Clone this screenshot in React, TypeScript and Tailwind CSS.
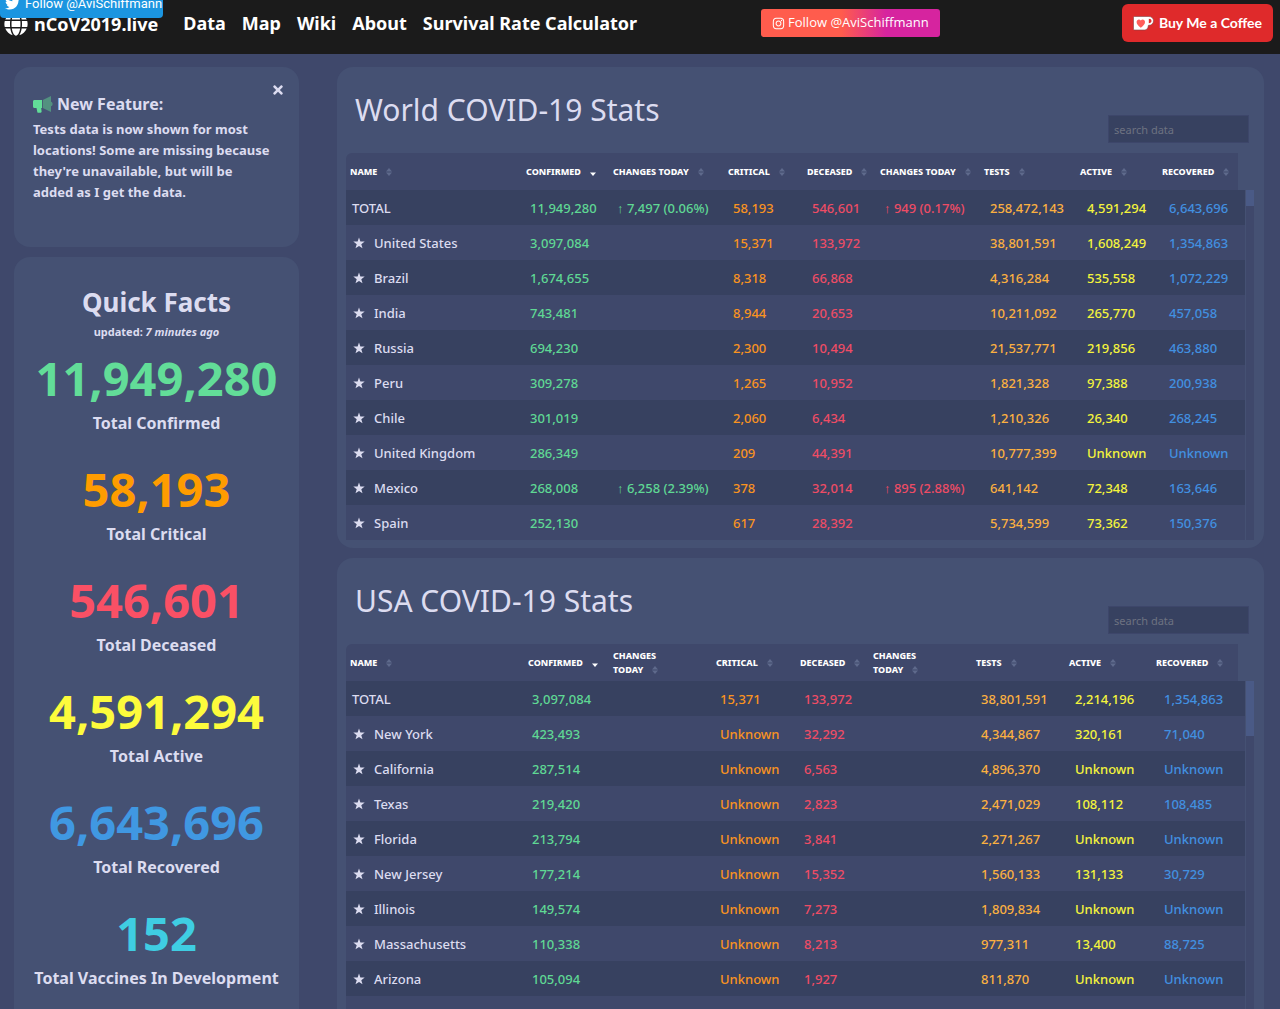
import { FaGlobe, FaInstagram, FaTimes, FaTwitter } from 'react-icons/fa'

type Row = [string, string, string, string, string, string, string, string, string]

const worldRows: Row[] = [
  ['TOTAL', '11,949,280', '↑ 7,497 (0.06%)', '58,193', '546,601', '↑ 949 (0.17%)', '258,472,143', '4,591,294', '6,643,696'],
  ['United States', '3,097,084', '', '15,371', '133,972', '', '38,801,591', '1,608,249', '1,354,863'],
  ['Brazil', '1,674,655', '', '8,318', '66,868', '', '4,316,284', '535,558', '1,072,229'],
  ['India', '743,481', '', '8,944', '20,653', '', '10,211,092', '265,770', '457,058'],
  ['Russia', '694,230', '', '2,300', '10,494', '', '21,537,771', '219,856', '463,880'],
  ['Peru', '309,278', '', '1,265', '10,952', '', '1,821,328', '97,388', '200,938'],
  ['Chile', '301,019', '', '2,060', '6,434', '', '1,210,326', '26,340', '268,245'],
  ['United Kingdom', '286,349', '', '209', '44,391', '', '10,777,399', 'Unknown', 'Unknown'],
  ['Mexico', '268,008', '↑ 6,258 (2.39%)', '378', '32,014', '↑ 895 (2.88%)', '641,142', '72,348', '163,646'],
  ['Spain', '252,130', '', '617', '28,392', '', '5,734,599', '73,362', '150,376'],
]

const usaRows: Row[] = [
  ['TOTAL', '3,097,084', '', '15,371', '133,972', '', '38,801,591', '2,214,196', '1,354,863'],
  ['New York', '423,493', '', 'Unknown', '32,292', '', '4,344,867', '320,161', '71,040'],
  ['California', '287,514', '', 'Unknown', '6,563', '', '4,896,370', 'Unknown', 'Unknown'],
  ['Texas', '219,420', '', 'Unknown', '2,823', '', '2,471,029', '108,112', '108,485'],
  ['Florida', '213,794', '', 'Unknown', '3,841', '', '2,271,267', 'Unknown', 'Unknown'],
  ['New Jersey', '177,214', '', 'Unknown', '15,352', '', '1,560,133', '131,133', '30,729'],
  ['Illinois', '149,574', '', 'Unknown', '7,273', '', '1,809,834', 'Unknown', 'Unknown'],
  ['Massachusetts', '110,338', '', 'Unknown', '8,213', '', '977,311', '13,400', '88,725'],
  ['Arizona', '105,094', '', 'Unknown', '1,927', '', '811,870', 'Unknown', 'Unknown'],
]

const headings = ['Name', 'Confirmed', 'Changes Today', 'Critical', 'Deceased', 'Changes Today', 'Tests', 'Active', 'Recovered']

const columnColors = [
  'text-[#dcdcf0]',
  'text-[#5fd894]',
  'text-[#5fd894]',
  'text-[#f9931f]',
  'text-[#ee4c65]',
  'text-[#ee4c65]',
  'text-[#fbb040]',
  'text-[#f4f43c]',
  'text-[#4290e0]',
]

const facts = [
  { value: '11,949,280', label: 'Total Confirmed', color: 'text-[#62dd98]' },
  { value: '58,193', label: 'Total Critical', color: 'text-[#ff9c00]' },
  { value: '546,601', label: 'Total Deceased', color: 'text-[#fa5065]' },
  { value: '4,591,294', label: 'Total Active', color: 'text-[#fdfb3c]' },
  { value: '6,643,696', label: 'Total Recovered', color: 'text-[#4098e2]' },
  { value: '152', label: 'Total Vaccines In Development', color: 'text-[#3fcde2]' },
]

const navLinks = ['Data', 'Map', 'Wiki', 'About', 'Survival Rate Calculator']

function SortIcon({ active }: { active: boolean }) {
  return (
    <svg viewBox="0 0 6 8" className="inline-block w-[6px] h-[8px] ml-[9px]" aria-hidden="true">
      {!active && <path d="M0 3.4 3 0l3 3.4z" fill="#5f6a8c" />}
      <path d="M0 4.6h6L3 8z" fill={active ? '#ffffff' : '#5f6a8c'} />
    </svg>
  )
}

function Star() {
  return (
    <svg viewBox="0 0 12 12" className="w-3 h-3" aria-hidden="true">
      <path d="M6 .5 7.400 4.500 11.700 4.600 8.300 7.200 9.500 11.300 6 8.900 2.500 11.300 3.700 7.200.3 4.600 4.600 4.500z" fill="currentColor" />
    </svg>
  )
}

function Megaphone() {
  return (
    <svg viewBox="0 0 20 17" className="w-5 h-[17px] shrink-0" aria-hidden="true">
      <path d="M1.500 4H9v8H8.200l.4 3.600c.1.700-.3 1.200-1 1.200H5.400c-.6 0-1-.3-1.100-.9L3.500 12h-2C.6 12 0 11.400 0 10.500v-5C0 4.600.6 4 1.500 4z" fill="#62dd98" />
      <path d="M9.800 4 18 0v5.800c1 .3 1.600 1.100 1.600 2.200s-.6 1.900-1.600 2.200V16l-8.200-4z" fill="#539180" />
    </svg>
  )
}

function CoffeeCup() {
  return (
    <svg viewBox="0 0 21 15" className="w-[21px] h-[15px]" aria-hidden="true">
      <path
        d="M1.500.5H16c2.600 0 4.500 1.900 4.500 4.300S18.600 9.300 16 9.300h-.6c-.3 3-1.500 4.700-4 4.700H1.500c-.6 0-1-.4-1-1V1.500c0-.6.400-1 1-1z"
        fill="#fff"
        stroke="#7d4448"
        strokeWidth=".6"
      />
      <path d="M15.800 2.800v4.400c1.700 0 2.700-.8 2.700-2.200s-1-2.200-2.700-2.200z" fill="#df2a2b" />
      <path d="M7.800 11.800C5 9.500 3.600 8 3.600 6c0-2.600 3-3.400 4.200-1.400C9 2.600 12 3.400 12 6c0 2-1.400 3.500-4.200 5.800z" fill="#ff5e5b" />
    </svg>
  )
}

interface StatsProps {
  title: string
  rows: Row[]
  headColumns: string
  bodyColumns: string
  thumb: string
  wrapHeadings?: boolean
}

function StatsTable({ title, rows, headColumns, bodyColumns, thumb, wrapHeadings = false }: StatsProps) {
  return (
    <section className="bg-[#455173] rounded-2xl pl-[9px] pr-[10px] pb-2">
      <div className="flex justify-between items-end h-[86px] pl-[9px] pr-[5px]">
        <h2 className="text-[30px] leading-[40px] mb-[23px]">{title}</h2>
        <input
          type="search"
          aria-label={`Search ${title}`}
          placeholder="search data"
          className="w-[141px] h-7 mb-[10px] px-[5px] text-[11px] bg-[#374160] border border-[#3d466a] placeholder:text-[#6d7280] outline-none"
        />
      </div>
      <div className="relative">
        <table className="block w-full text-left">
          <thead className="block mr-4 bg-[#3f486b] rounded-tl-md">
            <tr className={`grid items-center h-[37px] ${headColumns}`}>
              {headings.map((heading, i) => (
                <th
                  key={i}
                  className={`min-w-0 pl-1 text-[9px] leading-[14px] font-extrabold uppercase text-white ${
                    wrapHeadings && heading === 'Changes Today' ? 'pr-8' : 'whitespace-nowrap'
                  }`}
                >
                  {heading}
                  <SortIcon active={i === 1} />
                </th>
              ))}
            </tr>
          </thead>
          <tbody className="block mr-[9px] h-[350px] overflow-hidden bg-[#3f486b]">
            {rows.map((row) => (
              <tr key={row[0]} className={`grid items-center h-[35px] odd:bg-[#374160] ${bodyColumns}`}>
                {row.map((cell, i) => (
                  <td key={i} className={`min-w-0 pl-[6px] text-[13px] leading-5 font-medium whitespace-nowrap ${columnColors[i]}`}>
                    {i === 0 && cell !== 'TOTAL' ? (
                      <span className="flex items-center gap-[9px] pl-px">
                        <Star />
                        {cell}
                      </span>
                    ) : (
                      cell
                    )}
                  </td>
                ))}
              </tr>
            ))}
          </tbody>
        </table>
        <div className="absolute right-0 top-[37px] bottom-0 w-2 bg-[#3f486b]">
          <div className={`bg-[#4a5a86] ${thumb}`} />
        </div>
      </div>
    </section>
  )
}

export default function App() {
  return (
    <div className="h-screen overflow-hidden bg-[#3f486b] text-[#dcdcf0] font-['Noto_Sans','Open_Sans',sans-serif]">
      <header className="relative flex items-center h-[54px] bg-[#1b1b1b] text-white pl-1 pr-[7px] pb-2">
        <a href="#" className="flex items-center gap-[6px] pt-px text-lg font-bold">
          <FaGlobe className="w-6 h-6" />
          nCoV2019.live
        </a>
        <nav className="flex gap-4 ml-[25px] text-lg font-bold">
          {navLinks.map((link) => (
            <a key={link} href="#">
              {link}
            </a>
          ))}
        </nav>
        <a
          href="#"
          className="absolute left-0 -top-[11px] flex items-center gap-[5px] h-[29px] w-[163px] pl-[5px] rounded bg-[#1b95e0] text-[13px] whitespace-nowrap font-['Roboto',sans-serif]"
        >
          <FaTwitter className="w-[15px] h-[15px]" />
          Follow @AviSchiffmann
        </a>
        <div className="flex flex-1 justify-between items-center pl-[124px]">
          <a
            href="#"
            className="flex items-center gap-[3px] h-7 px-[11px] rounded-[3px] bg-[linear-gradient(90deg,#ff5c4d_45%,#d6249f_70%)] text-[13px] whitespace-nowrap font-['Open_Sans',sans-serif]"
          >
            <FaInstagram className="w-[13px] h-[13px]" />
            Follow @AviSchiffmann
          </a>
          <a
            href="#"
            className="flex items-center gap-[5px] h-[38px] px-[11px] rounded-md bg-[#df2a2b] text-sm font-bold font-['Lato',sans-serif] whitespace-nowrap"
          >
            <CoffeeCup />
            Buy Me a Coffee
          </a>
        </div>
      </header>
      <main className="flex items-start gap-[38px] pt-[13px] pl-[14px] pr-4">
        <aside className="w-[285px] shrink-0 flex flex-col gap-[10px]">
          <section className="relative h-[180px] pl-[19px] pr-6 pt-[26px] rounded-2xl bg-[#455173]">
            <button aria-label="Close" className="absolute right-[14px] top-4">
              <FaTimes className="w-[14px] h-[14px]" />
            </button>
            <h3 className="flex items-center gap-1 text-base leading-[22px] font-bold">
              <Megaphone />
              New Feature:
            </h3>
            <p className="mt-1 text-[13px] leading-[21px] font-bold">
              Tests data is now shown for most locations! Some are missing because they're unavailable, but will be
              added as I get the data.
            </p>
          </section>
          <section className="h-[800px] pt-[25px] rounded-2xl bg-[#455173] text-center font-bold">
            <h2 className="text-[26px] leading-10">Quick Facts</h2>
            <p className="text-[11px] leading-5">
              updated: <em>7 minutes ago</em>
            </p>
            {facts.map((fact) => (
              <div key={fact.label} className="h-[111px] pt-2">
                <div className={`text-[47px] leading-[56px] ${fact.color}`}>{fact.value}</div>
                <div className="mt-1 text-base leading-[26px]">{fact.label}</div>
              </div>
            ))}
          </section>
        </aside>
        <div className="flex-1 min-w-0 flex flex-col gap-[10px]">
          <StatsTable
            title="World COVID-19 Stats"
            rows={worldRows}
            headColumns="grid-cols-[176fr_87fr_115fr_79fr_73fr_104fr_96fr_82fr_80fr]"
            bodyColumns="grid-cols-[178fr_87fr_116fr_79fr_72fr_106fr_97fr_82fr_82fr]"
            thumb="h-4"
          />
          <StatsTable
            title="USA COVID-19 Stats"
            rows={usaRows}
            headColumns="grid-cols-[178fr_85fr_103fr_84fr_73fr_103fr_93fr_87fr_86fr]"
            bodyColumns="grid-cols-[180fr_85fr_103fr_84fr_74fr_103fr_94fr_89fr_87fr]"
            thumb="h-[55px]"
            wrapHeadings
          />
        </div>
      </main>
    </div>
  )
}
